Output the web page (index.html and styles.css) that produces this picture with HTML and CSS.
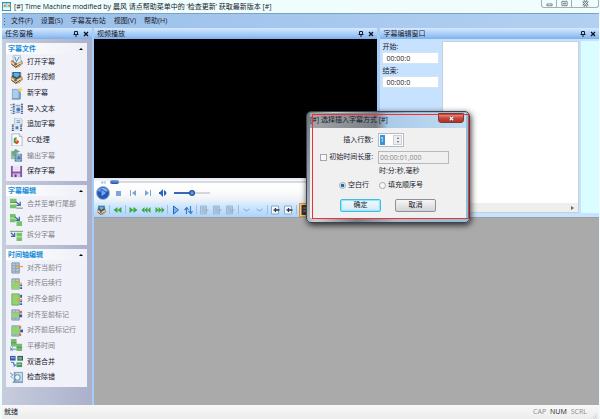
FILE: index.html
```html
<!DOCTYPE html>
<html lang="zh-CN">
<head>
<meta charset="utf-8">
<title>Time Machine</title>
<link rel="stylesheet" href="styles.css">
</head>
<body>
<svg class="defs" aria-hidden="true">
  <symbol id="reel" viewBox="0 0 14 14"><path d="M1 6l4-1 8 1 1 3-4 4-4 1-5-4z" fill="#b98a50"/><path d="M1 7l5 3 7-3-3 5-4 1-4-3z" fill="#f0d9ae"/><path d="M2 10l4 3 5-3" stroke="#63431f" fill="none"/><circle cx="6" cy="10" r="1.3" fill="#54606e"/></symbol>
  <symbol id="open-sub" viewBox="0 0 14 14"><use href="#reel"/><path d="M3 1l8-1 1 7-4 2-4-2z" fill="#e9f2fb" stroke="#7fa0bd" stroke-width=".6"/><path d="M5 2l2 5 3-5" stroke="#4b7ba9" fill="none"/></symbol>
  <symbol id="open-vid" viewBox="0 0 14 14"><use href="#reel"/><path d="M2 1h10v5L7 9 2 6z" fill="#35516f"/><path d="M4 2h6v3L7 7 4 5z" fill="#55b4e0"/><path d="M2 2h1M11 2h1M2 4h1M11 4h1" stroke="#dbe8f1"/></symbol>
  <symbol id="new-sub" viewBox="0 0 14 14"><path d="M2 2h9v11H2z" fill="#80aed6"/><path d="M3 3h6v9H3z" fill="#a9cdea"/><path d="M2 13h9V5" stroke="#5985b2" fill="none"/><path d="M11 0l1 2 2 1-2 1-1 2-1-2-2-1 2-1z" fill="#f5d850"/></symbol>
  <symbol id="import" viewBox="0 0 14 14"><path d="M4 2h9v11H4z" fill="#d9e8f7"/><path d="M4 2v11M13 2v11" stroke="#203a63" stroke-width="2" stroke-dasharray="1 1"/><path d="M6 4h5M6 11h5" stroke="#7797bc"/><circle cx="9" cy="8" r="2.2" fill="#4c7cba"/><path d="M0 3h3M1 6h2M0 9h3M1 12h2" stroke="#7498c6"/></symbol>
  <symbol id="append" viewBox="0 0 14 14"><path d="M5 0h6l2 2v6H5z" fill="#e5eef7" stroke="#8ba7c5" stroke-width=".7"/><path d="M7 3h4M7 5h4" stroke="#6a8cb2"/><path d="M2 7h11v7H2z" fill="#dbe7f2"/><path d="M3 7v7M12 7v7" stroke="#30445e" stroke-width="2" stroke-dasharray="1 1"/><path d="M6 9h3v3H6z" fill="#4f7db5"/></symbol>
  <symbol id="cc" viewBox="0 0 14 14"><path d="M2 1h8l3 3v10H2z" fill="#fdfdff" stroke="#a8b5c5"/><path d="M10 1v3h3" fill="#dae6f3" stroke="#a8b5c5"/><path d="M4 6l3-2v6l-3 1z" fill="#459d4d"/><path d="M7 7l3 2-2 3-3-1z" fill="#d94b30"/><circle cx="7" cy="8" r="1.2" fill="#edbd4d"/></symbol>
  <symbol id="export" viewBox="0 0 14 14"><path d="M1 2h7v9H1z" fill="#95bf9d"/><path d="M2 4l4-4 5 3-4 1v3H3z" fill="#65a87d"/><path d="M5 5h8v9H5z" fill="#92b3d3"/><path d="M6 6v8M12 6v8" stroke="#426586" stroke-width="1.5" stroke-dasharray="1 1"/><path d="M8 8h3v3H8z" fill="#527ca9"/></symbol>
  <symbol id="save" viewBox="0 0 14 14"><path d="M1 1h12v12H1z" fill="#8456a8"/><path d="M3 1h8v6H3z" fill="#f3ebf7"/><path d="M3 9h8v4H3z" fill="#d4bce3"/><path d="M5 10h2v3H5z" fill="#68398e"/><path d="M4 3h6M4 5h6" stroke="#dccfe4"/></symbol>
  <symbol id="merge-end" viewBox="0 0 14 14"><path d="M0 2h7v4H0zM0 8h7v4H0z" fill="#75c464"/><path d="M0 6h7M7 12h7" stroke="#66866b"/><path d="M6 5l5 4m0-4v4H7" stroke="#446ba4" stroke-width="1.4" fill="none"/></symbol>
  <symbol id="merge-new" viewBox="0 0 14 14"><path d="M0 1h6v4H0zM0 6h6v4H0zM7 9h6v5H7z" fill="#75c464"/><path d="M5 4l5 4m0-4v4H6" stroke="#446ba4" stroke-width="1.4" fill="none"/></symbol>
  <symbol id="split" viewBox="0 0 14 14"><path d="M0 2h14v1H0z" fill="#6b9863"/><path d="M7 4h6v4H7zM7 9h6v4H7z" fill="#75c464"/><path d="M1 4l4 4m0-4v4H1" stroke="#446ba4" stroke-width="1.4" fill="none"/></symbol>
  <symbol id="sheet" viewBox="0 0 14 14"><path d="M2 2h8v11H2z" fill="#b5c5d5" stroke="#8298b0"/><path d="M2 5h8M2 8h8M2 11h8M6 2v11" stroke="#8ca4bc"/></symbol>
  <symbol id="al-cur" viewBox="0 0 14 14"><use href="#sheet"/><path d="M6 6h8" stroke="#eb9d4a" stroke-width="1.4"/></symbol>
  <symbol id="al-next" viewBox="0 0 14 14"><use href="#sheet"/><path d="M2 5h8v8H2z" fill="#92d46d"/><path d="M6 5l7 2" stroke="#eb9d4a" stroke-width="1.4"/><path d="M11 8h2v2h-2zM11 11h2v2h-2z" fill="#35559f"/></symbol>
  <symbol id="al-all" viewBox="0 0 14 14"><path d="M2 1h8v12H2z" fill="#92d46d" stroke="#79a270"/><path d="M6 7h7" stroke="#eb9d4a" stroke-width="1.4"/><path d="M11 2h2v3h-2zM11 8h2v2h-2zM11 11h2v2h-2z" fill="#35559f"/></symbol>
  <symbol id="al-prev" viewBox="0 0 14 14"><use href="#sheet"/><path d="M2 5h8v5H2z" fill="#92d46d"/><path d="M10 3h3v3h-3z" fill="#df704f"/><path d="M10 7h3v3h-3z" fill="#35559f"/></symbol>
  <symbol id="al-both" viewBox="0 0 14 14"><use href="#sheet"/><path d="M2 3h8v8H2z" fill="#92d46d"/><path d="M10 2h2v3h-2zM10 10h2v3h-2z" fill="#df704f"/><path d="M11 6h3v3h-3z" fill="#35559f"/></symbol>
  <symbol id="shift" viewBox="0 0 14 14"><path d="M1 0h6v8H1zM7 5h6v8H7z" fill="#78ba70"/><path d="M1 4h6M7 9h6" stroke="#5b925b"/><path d="M0 8v5M1 11h6M3 9l-2 2 2 2" stroke="#4e86bb" fill="none"/></symbol>
  <symbol id="dual" viewBox="0 0 14 14"><path d="M0 1h6v5H0z" fill="#345ca9"/><path d="M8 1h6v5H8z" fill="#2a5064"/><path d="M9 2h4v3H9z" fill="#68b94d"/><path d="M7 8h6v5H7z" fill="#459a55"/><path d="M1 8h3v3h2M4 9l2 2-2 2" stroke="#3972c5" fill="none"/><path d="M1 3h4M8 10h4" stroke="#b8d4ee"/></symbol>
  <symbol id="check" viewBox="0 0 14 14"><path d="M4 1h10v12H4z" fill="#7fa4bd"/><path d="M6 2h7v9H6z" fill="#c7dae7"/><circle cx="8" cy="7" r="3" fill="#e9f4fb" stroke="#577f9e"/><path d="M6 9l-3 4M0 2l3 2-2 2 2 2" stroke="#5d8aa8" fill="none"/></symbol>
  <symbol id="pin" viewBox="0 0 8 8"><path d="M2.5 1.5h3v3h-3zM1.5 4.5h5M4 5v2" stroke="#121c2b" fill="none"/></symbol>
  <symbol id="close" viewBox="0 0 8 8"><path d="M2 2l4 4M6 2L2 6" stroke="#0c141f" stroke-width="1.3" fill="none"/></symbol>
  <symbol id="grey-doc" viewBox="0 0 10 10"><path d="M1 1h6v8H1z" fill="#bdd1e6" stroke="#9db8d3"/><path d="M2 3h4M2 5h7M2 7h5" stroke="#8faac6"/></symbol>
  <symbol id="mark-doc" viewBox="0 0 10 10"><path d="M1 1h7v8H1z" fill="#f4f7fb" stroke="#8fa6bc"/><path d="M3 5h6M5 3v4" stroke="#2f3c4b" stroke-width="1.3"/></symbol>
</svg>

<header class="titlebar">
  <svg class="app-icon" viewBox="0 0 10 10" aria-hidden="true"><path d="M0 0h10v10H0z" fill="#3f7f9c"/><path d="M1 1h8v8H1z" fill="#7fd6f2"/><path d="M1 2h3v3H1zM6 2h3v3H6z" fill="#fff4c8"/><path d="M2 3h2v2H2zM7 3h2v2H7z" fill="#e0692b"/><path d="M1 6h8v3H1z" fill="#eaf9ff"/></svg>
  <h1>[#] Time Machine modified by 晨风 请点帮助菜单中的 ‘检查更新’ 获取最新版本 [#]</h1>
  <div class="window-buttons">
    <button aria-label="最小化"><svg viewBox="0 0 9 8"><path d="M1.500 4.500h6v2h-6z" fill="#fff" stroke="#6c7980"/></svg></button>
    <button aria-label="最大化"><svg viewBox="0 0 9 8"><path d="M1.500 1.500h6v5h-6zM3 3.500h3v1H3z" fill="#fff" stroke="#6c7980"/></svg></button>
    <button class="wide" aria-label="关闭"><svg viewBox="0 0 9 8"><path d="M2 1l5 6M7 1L2 7" stroke="#6c7980" stroke-width="3"/><path d="M2 1l5 6M7 1L2 7" stroke="#fff"/></svg></button>
  </div>
</header>

<div class="frame">
  <nav class="menu">
    <button>文件(F)</button><button>设置(S)</button><button>字幕发布站</button><button>视图(V)</button><button>帮助(H)</button>
  </nav>

  <div class="workspace">
    <aside class="tasks">
      <header class="bar"><h2>任务窗格</h2><button aria-label="固定"><svg><use href="#pin"/></svg></button><button aria-label="关闭"><svg><use href="#close"/></svg></button></header>
      <div class="groups">
        <section class="group">
          <h3>字幕文件<i></i></h3>
          <div class="rows long">
            <button><svg><use href="#open-sub"/></svg>打开字幕</button>
            <button><svg><use href="#open-vid"/></svg>打开视频</button>
            <button><svg><use href="#new-sub"/></svg>新字幕</button>
            <button><svg><use href="#import"/></svg>导入文本</button>
            <button><svg><use href="#append"/></svg>追加字幕</button>
            <button><svg><use href="#cc"/></svg>CC处理</button>
            <button disabled><svg><use href="#export"/></svg>输出字幕</button>
            <button><svg><use href="#save"/></svg>保存字幕</button>
          </div>
        </section>
        <section class="group">
          <h3>字幕编辑<i></i></h3>
          <div class="rows">
            <button disabled><svg><use href="#merge-end"/></svg>合并至单行尾部</button>
            <button disabled><svg><use href="#merge-new"/></svg>合并至新行</button>
            <button disabled><svg><use href="#split"/></svg>拆分字幕</button>
          </div>
        </section>
        <section class="group">
          <h3>时间轴编辑<i></i></h3>
          <div class="rows long">
            <button disabled><svg><use href="#al-cur"/></svg>对齐当前行</button>
            <button disabled><svg><use href="#al-next"/></svg>对齐后续行</button>
            <button disabled><svg><use href="#al-all"/></svg>对齐全部行</button>
            <button disabled><svg><use href="#al-prev"/></svg>对齐至前标记</button>
            <button disabled><svg><use href="#al-both"/></svg>对齐前后标记行</button>
            <button disabled><svg><use href="#shift"/></svg>平移时间</button>
            <button><svg><use href="#dual"/></svg>双语合并</button>
            <button><svg><use href="#check"/></svg>检查除错</button>
          </div>
        </section>
      </div>
    </aside>

    <main class="content">
      <div class="upper">
        <section class="video">
          <header class="bar"><h2>视频播放</h2><button aria-label="固定"><svg><use href="#pin"/></svg></button><button aria-label="关闭"><svg><use href="#close"/></svg></button></header>
          <div class="screen"></div>
          <div class="player">
            <div class="seek"><svg viewBox="0 0 8 6"><path d="M4 1L1 3l3 2zM7 1L4 3l3 2z" fill="#a9c6e8"/></svg><i></i><span class="groove"></span></div>
            <div class="transport">
              <button class="play" aria-label="播放"><svg viewBox="0 0 14 14"><circle cx="7" cy="7" r="6.500" fill="#2459ba" stroke="#9fb7da"/><path d="M2 5a5.500 5.500 0 0110 0q-4 2-10 0" fill="#7eade9"/><path d="M5 3l6 4-6 4z" fill="#6baaf0" stroke="#163f91" stroke-width=".7"/></svg></button>
              <button aria-label="停止"><svg viewBox="0 0 8 8"><path d="M2 2h5v5H2z" fill="#7fa6d8"/></svg></button>
              <button aria-label="上一个"><svg viewBox="0 0 8 8"><path d="M1 1h1v6H1zM7 1v6L3 4z" fill="#79a4d7"/></svg></button>
              <button aria-label="下一个"><svg viewBox="0 0 8 8"><path d="M6 1h1v6H6zM1 1v6l4-3z" fill="#79a4d7"/></svg></button>
              <button aria-label="静音"><svg viewBox="0 0 8 8"><path d="M0 3h1l3-3v8L1 5H0zM5 1q5 3 0 6z" fill="#2465b7"/></svg></button>
              <input type="range" min="0" max="100" value="50" aria-label="音量">
            </div>
          </div>
          <div class="tools">
            <button aria-label="打开"><svg><use href="#open-vid"/></svg></button><i></i>
            <button aria-label="后退"><svg viewBox="0 0 10 10"><path d="M5 2L1 5l4 3zM9 2L5 5l4 3z" fill="#3da83c"/></svg></button><i></i>
            <button aria-label="前进"><svg viewBox="0 0 10 10"><path d="M1 2l4 3-4 3zM5 2l4 3-4 3z" fill="#3da83c"/></svg></button>
            <button aria-label="快退"><svg viewBox="0 0 10 10"><path d="M3 2L0 5l3 3zM6 2L3 5l3 3zM9 2L6 5l3 3z" fill="#3da83c"/></svg></button>
            <button aria-label="快进"><svg viewBox="0 0 10 10"><path d="M1 2l3 3-3 3zM4 2l3 3-3 3zM7 2l3 3-3 3z" fill="#3da83c"/></svg></button><i></i>
            <button aria-label="播放片段"><svg viewBox="0 0 10 10"><path d="M3 1l5 4-5 4z" fill="#78b4ed" stroke="#2768b9"/></svg></button>
            <button aria-label="循环"><svg viewBox="0 0 10 10"><path d="M3 9V3L1 5M3 2l2 3M7 1v7L5 6m2 3l2-3" fill="none" stroke="#3f7cc4" stroke-width="1.2"/></svg></button><i></i>
            <button aria-label="插入"><svg><use href="#grey-doc"/></svg></button>
            <button aria-label="追加"><svg><use href="#grey-doc"/></svg></button>
            <button aria-label="删除"><svg><use href="#grey-doc"/></svg></button><i></i>
            <button aria-label="撤销"><svg viewBox="0 0 10 10"><path d="M2 4l3 2 3-2" stroke="#84a5ca" fill="none"/></svg></button>
            <button aria-label="重做"><svg viewBox="0 0 10 10"><path d="M2 4l3 2 3-2" stroke="#84a5ca" fill="none"/></svg></button><i></i>
            <button aria-label="起点"><svg><use href="#mark-doc"/></svg></button>
            <button aria-label="终点"><svg><use href="#mark-doc"/></svg></button><i></i>
            <button class="active" aria-label="列表"><svg viewBox="0 0 10 10"><path d="M0 0h10v10H0z" fill="#3a3431"/><path d="M2 3h6M2 6h6" stroke="#a7988a"/></svg></button>
          </div>
        </section>

        <section class="editor">
          <header class="bar"><h2>字幕编辑窗口</h2><button aria-label="固定"><svg><use href="#pin"/></svg></button><button aria-label="关闭"><svg><use href="#close"/></svg></button></header>
          <div class="editor-body">
            <div class="times">
              <label for="start">开始:</label><input id="start" value="00:00:0">
              <label for="end">结束:</label><input id="end" value="00:00:0">
            </div>
            <div class="text-area"><textarea aria-label="字幕文本"></textarea><div class="hscroll"><i></i></div></div>
            <div class="side"></div>
          </div>
        </section>
      </div>
      <div class="canvas"></div>
    </main>
  </div>
  <footer class="status"><span class="ready">就绪</span><span>CAP</span><span class="on">NUM</span><span>SCRL</span><i></i></footer>
</div>

<div class="dialog" role="dialog" aria-labelledby="dlg-title">
  <header><h2 id="dlg-title">[#] 选择插入字幕方式 [#]</h2><button aria-label="关闭"><svg viewBox="0 0 8 8"><path d="M2 2l4 4M6 2L2 6" stroke="#713a36" stroke-width="3"/><path d="M2 2l4 4M6 2L2 6" stroke="#fff" stroke-width="1.5"/></svg></button></header>
  <form class="client">
    <label class="right" for="count">插入行数:</label>
    <div class="spin"><input id="count" value="1"><span><b></b><b class="down"></b></span></div>
    <label class="right"><input type="checkbox">初始时间长度:</label>
    <input class="duration" value="00:00:01,000" aria-label="初始时间长度" disabled>
    <p>时:分:秒,毫秒</p>
    <div class="radios"><label><input type="radio" name="mode" checked>空白行</label><label><input type="radio" name="mode">填充顺序号</label></div>
    <div class="actions"><button class="ok" type="button">确定</button><button type="button">取消</button></div>
  </form>
  <div class="highlight"></div>
</div>
</body>
</html>
```
FILE: styles.css
```css
* { box-sizing: border-box; }
body {
  margin: 0;
  height: 100vh;
  display: flex;
  flex-direction: column;
  overflow: hidden;
  background: #effefd;
  font: 7px/10px "Open Sans", "Noto Sans CJK SC", sans-serif;
  color: #17202c;
}
h1, h2, h3, p { margin: 0; font: inherit; }
button, input, textarea { font: inherit; color: inherit; margin: 0; padding: 0; border: 0; background: none; border-radius: 0; }
svg { display: block; }
.defs { position: absolute; width: 0; height: 0; }

.titlebar { display: flex; flex: none; height: 13px; padding-left: 2px; gap: 3px; align-items: center; }
.app-icon { width: 9px; height: 9px; }
.titlebar h1 { flex: 1; white-space: nowrap; }
.window-buttons { display: flex; align-self: flex-start; height: 8px; margin-right: 1px; border: 1px solid #a4afb3; border-top: 0; border-radius: 0 0 3px 3px; }
.window-buttons button { width: 15px; display: grid; place-items: center; border-right: 1px solid #a4afb3; }
.window-buttons .wide { width: 26px; border: 0; }
.window-buttons svg { width: 9px; height: 7px; }

.frame { flex: 1; min-height: 0; display: flex; flex-direction: column; margin: 0 1px 0 2px; border-top: 1px solid #7da0c5; }
.menu { display: flex; flex: none; align-items: center; gap: 8px; height: 14px; padding-left: 2px; background: linear-gradient(90deg, #9abfe9, #b2d0f1); }
.menu::before { content: ""; width: 1px; height: 7px; margin-right: -2px; background: repeating-linear-gradient(#536b8b 0 1px, transparent 1px 3px); }
.menu button { white-space: nowrap; }
.workspace { flex: 1; min-height: 0; display: flex; gap: 2px; background: #a5cdf8; }

.bar { flex: none; display: flex; align-items: center; height: 11px; gap: 2px; padding: 0 2px 0 3px; background: linear-gradient(#d5e9ff, #9ac4f5 70%, #7eb0ea); }
.bar h2 { flex: 1; }
.bar svg { width: 8px; height: 8px; }

.tasks { width: 90px; flex: none; display: flex; flex-direction: column; background: #aeb4cf; }
.groups { flex: 1; display: flex; flex-direction: column; gap: 4px; padding: 4px 5px 0 4px; background: linear-gradient(90deg, #c7cddd, #abb1cb); }
.group { padding-bottom: 2px; background: #f1f2f9; }
.group h3 { display: flex; justify-content: space-between; align-items: center; height: 11px; padding: 0 4px 0 2px; background: linear-gradient(90deg, #fff, #eef0f6); color: #208fd9; font-weight: 700; }
.group h3 i { border: 2px solid transparent; border-top: 0; border-bottom: 2px solid #000; }
.rows { display: grid; grid-auto-rows: 1fr; height: 47px; padding-left: 4px; }
.rows.long { height: 125px; }
.rows button { display: flex; align-items: center; gap: 4px; white-space: nowrap; }
.rows button:disabled { color: #7d8087; }
.rows svg { width: 13px; height: 13px; }

.content { flex: 1; min-width: 0; display: flex; flex-direction: column; }
.upper { display: flex; gap: 3px; height: 189px; flex: none; }
.video { flex: 284; min-width: 0; display: flex; flex-direction: column; }
.screen { flex: 1; background: #000; }
.player { height: 24px; padding: 1px 0 1px 5px; background: linear-gradient(#dfe5ec, #fff 4px, #fbfbfc 60%, #e9eef4); }
.seek { display: flex; align-items: center; height: 6px; gap: 3px; }
.seek svg { width: 8px; height: 5px; }
.seek i { width: 9px; height: 4px; margin-right: -3px; border-radius: 2px; background: linear-gradient(#79a7e2, #2052ab); }
.groove { flex: 1; height: 2px; background: #d8dadd; }
.transport { display: flex; align-items: center; height: 15px; gap: 7px; margin-left: -3px; }
.transport svg { width: 8px; height: 8px; }
.transport .play { margin-right: -3px; }
.transport .play svg { width: 14px; height: 14px; }
.transport input { appearance: none; width: 36px; height: 8px; background: linear-gradient(90deg, #3569b3 50%, #d3d7dc 50%) center / 100% 2px no-repeat; }
.transport input::-webkit-slider-thumb { appearance: none; width: 6px; height: 6px; border-radius: 50%; background: radial-gradient(#82b5ef, #1c50a6 60%); }
.tools { display: flex; align-items: center; gap: 2px; height: 15px; padding-left: 2px; overflow: hidden; background: linear-gradient(#dceeff, #add3fa); }
.tools button { flex: none; }
.tools svg { width: 11px; height: 10px; }
.tools i { flex: none; width: 1px; height: 9px; background: #9dbfe2; }
.tools .active { padding: 1px; border: 1px solid #e3912a; background: #f6c885; }

.editor { flex: 219; min-width: 0; display: flex; flex-direction: column; background: #c7e2ff; }
.editor-body { flex: 1; display: flex; gap: 2px; padding: 2px 0 4px; }
.times { width: 60px; display: flex; flex-direction: column; align-items: flex-start; padding: 1px 0 0 2px; }
.times label { height: 10px; }
.times input { width: 57px; height: 12px; margin-bottom: 2px; padding: 0 3px; background: #fff; border: 1px solid #d5e3f0; }
.text-area { flex: 1; display: flex; flex-direction: column; background: #fff; border: 1px solid #c5d0d8; }
.text-area textarea { flex: 1; width: 100%; min-height: 0; resize: none; }
.hscroll { display: flex; height: 9px; align-items: center; justify-content: flex-end; padding-right: 4px; background: #eeeeef; }
.hscroll i { border: 2px solid transparent; border-left: 3px solid #606873; border-right: 0; }
.side { width: 18px; background: #dafdff; }
.canvas { flex: 1; background: #aaa; border-top: 1px solid #9ba0a6; }

.status { flex: none; display: flex; align-items: center; gap: 4px; height: 14px; padding: 0 2px; background: linear-gradient(#f8f8f8, #edeced); }
.status .ready { flex: 1; }
.status span { color: #8c8c8c; }
.status .ready, .status .on { color: #17202c; }
.status i { width: 6px; height: 8px; align-self: flex-end; background: repeating-linear-gradient(135deg, #f4f4f4 0 1px, #d8d8d8 1px 2px); clip-path: polygon(100% 0, 100% 100%, 0 100%); }

/* The dialog floats over the workspace. */
.dialog { position: absolute; left: 306px; top: 111px; width: 164px; padding: 1px 3px 4px; border: 1px solid #394550; border-radius: 5px; background: linear-gradient(100deg, #69727b, #c9d1d8 15%, #75818d 38%, #a8b9c8 60%, #8cc1d7); box-shadow: 1px 2px 6px #000c; }
.dialog header { display: flex; justify-content: space-between; height: 15px; padding: 2px 2px 0 0; background: linear-gradient(90deg, #a0a5aa, #7d8287 40%, #777c82 42%, #a9cbea 50%, #c3dcf0); }
.dialog header button { width: 26px; height: 10px; margin-top: -2px; display: grid; place-items: center; background: linear-gradient(#e6a296, #c54a3d 50%, #b53024); border: 1px solid #793b36; border-radius: 0 0 3px 3px; }
.dialog header svg { width: 7px; height: 7px; }
.client { display: grid; grid-template-columns: 63px 1fr; grid-template-rows: 14px 14px 8px 14px 20px; gap: 3px 5px; align-items: center; height: 90px; padding: 5px 0 2px; background: #f0f0f0; }
.right { display: flex; align-items: center; justify-content: flex-end; gap: 2px; white-space: nowrap; }
.spin { display: flex; width: 26px; height: 14px; padding: 1px; background: #fff; border: 1px solid #b3bac1; }
.spin input { width: 5px; height: 10px; background: #3993d8; color: #fff; }
.spin span { margin-left: auto; width: 9px; display: flex; flex-direction: column; justify-content: space-evenly; align-items: center; background: #eee; border: 1px solid #ccd0d6; }
.spin b { border: 1px solid transparent; border-top: 0; border-bottom: 2px solid #4a5c7b; }
.spin .down { transform: rotate(180deg); }
.duration { width: 71px; height: 13px; padding: 0 1px; border: 1px solid #b5b8bc; color: #888; }
.client p { grid-column: 2; padding-left: 1px; line-height: 8px; }
.client [type=checkbox], .client [type=radio] { appearance: none; width: 7px; height: 7px; border: 1px solid #a3a9af; background: #f9f9f9; }
.client [type=radio] { border-radius: 50%; }
.client [type=radio]:checked { background: radial-gradient(#1c719d 45%, #eef8fd 60%); }
.radios { grid-column: 1 / -1; display: flex; gap: 10px; padding-left: 29px; }
.radios label { display: flex; align-items: center; gap: 2px; white-space: nowrap; }
.actions { grid-column: 1 / -1; display: flex; gap: 14px; padding-left: 30px; }
.actions button { width: 41px; height: 13px; border: 1px solid #8e9297; border-radius: 2px; background: linear-gradient(#f6f6f6, #e5e5e5 50%, #d2d3d5); }
.actions .ok { border-color: #38bfe5; background: linear-gradient(#f2fbff, #d0eaf5); box-shadow: inset 0 0 1px 1px #99e1f6; }
.highlight { position: absolute; inset: 2px 0 3px 5px; border: 1px solid #f22e36; pointer-events: none; }
```
